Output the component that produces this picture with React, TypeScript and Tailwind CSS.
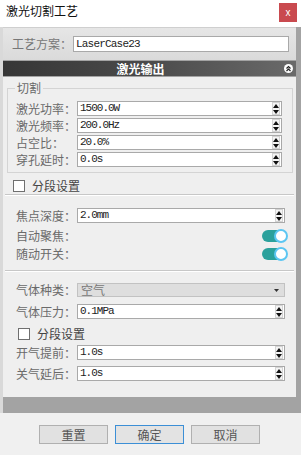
import React from 'react'

const cjk = { fontFamily: '"Noto Sans CJK SC", "Noto Sans", sans-serif' }
const mono = { fontFamily: '"Liberation Mono", "Noto Sans CJK SC", monospace' }

function Spin() {
  return (
    <div className="flex flex-col items-center justify-center gap-[2px] w-[8px] h-[13px] border border-[#d4d4d4] bg-[#f4f4f4] mr-[1px]">
      <svg width="6" height="4" viewBox="0 0 6 4"><path d="M0 4 L3 0 L6 4 Z" fill="#111" /></svg>
      <svg width="6" height="4" viewBox="0 0 6 4"><path d="M0 0 L6 0 L3 4 Z" fill="#111" /></svg>
    </div>
  )
}

function NumField({ label, value, w = 'w-[205px]' }: { label: string; value: string; w?: string }) {
  return (
    <div className="flex items-center h-[15px]">
      <span className="w-[61px] text-[12px] leading-none text-[#6a6a6a] whitespace-nowrap" style={cjk}>{label}</span>
      <div className={`${w} h-[15px] flex items-center justify-between bg-white border border-[#a9a9a9]`}>
        <span className="pl-[2px] text-[11px] tracking-[-1px] text-[#222] leading-none" style={mono}>{value}</span>
        <Spin />
      </div>
    </div>
  )
}

function Toggle() {
  return (
    <div className="relative w-[25px] h-[12px] rounded-full bg-[#2ba19c]">
      <div className="absolute right-[-1px] top-[-1px] w-[14px] h-[14px] rounded-full bg-white border-2 border-[#5cc6f2]" />
    </div>
  )
}

function Check({ label }: { label: string }) {
  return (
    <div className="flex items-center gap-[7px] h-[12px]">
      <div className="w-[12px] h-[12px] bg-white border border-[#6f6f6f]" />
      <span className="text-[12px] leading-none text-[#444]" style={cjk}>{label}</span>
    </div>
  )
}

function Btn({ label, primary }: { label: string; primary?: boolean }) {
  return (
    <button
      className={`w-[69px] h-[19px] text-[12px] leading-none text-[#555] ${primary ? 'border border-[#3c8fd6] bg-[#e3e3e3]' : 'border border-[#b0b0b0] bg-[#e1e1e1]'}`}
      style={cjk}
    >
      {label}
    </button>
  )
}

export default function App() {
  return (
    <div className="w-[301px] h-[455px] bg-[#f0f0f0] flex flex-col overflow-hidden">
      {/* title bar */}
      <div className="h-[27px] bg-white flex items-start justify-between pl-[6px] pr-[4px]">
        <span className="mt-[5px] text-[12px] leading-none text-[#111]" style={cjk}>激光切割工艺</span>
        <div className="mt-[3px] w-[18px] h-[19px] bg-[#c94a4f] flex items-center justify-center">
          <span className="text-white text-[10px] leading-none" style={{ fontFamily: '"Liberation Sans", sans-serif' }}>x</span>
        </div>
      </div>

      {/* main area */}
      <div className="h-[386px] bg-[#a3a3a3] border-l-[3px] border-[#d9d9d9] pr-[5px] flex flex-col">
        <div className="h-[33px] bg-gradient-to-b from-[#e6e6e6] to-[#dadada] border-t border-[#cfcfcf] flex items-center pl-[9px] pr-[4px]">
          <span className="w-[61px] text-[12px] leading-none text-[#777]" style={cjk}>工艺方案：</span>
          <div className="w-[216px] h-[16px] bg-white border border-[#a9a9a9] flex items-center">
            <span className="pl-[2px] text-[11px] tracking-[-0.8px] text-[#222] leading-none" style={mono}>LaserCase23</span>
          </div>
        </div>

        <div className="mt-[1px] h-[15px] bg-gradient-to-r from-[#363636] via-[#4b4b4b] to-[#6a6a6a] flex items-center relative">
          <span className="flex-1 text-center pr-[18px] text-[12px] leading-none font-bold text-white" style={cjk}>激光输出</span>
          <div className="absolute right-[3px] top-[3px] w-[9px] h-[9px] rounded-full bg-white flex items-center justify-center">
            <svg width="7" height="7" viewBox="0 0 7 7">
              <path d="M1.5 3.5 L3.5 1.5 L5.5 3.5 M1.5 6 L3.5 4 L5.5 6" stroke="#222" strokeWidth="1.2" fill="none" />
            </svg>
          </div>
        </div>

        {/* panel */}
        <div className="mt-[1px] h-[320px] bg-[#efefef] flex flex-col">
          <div className="mt-[11px] ml-[4px] mr-[3px] border border-[#d4d4d4] pb-[5px]">
            <span className="block w-fit -mt-[8px] ml-[7px] px-[2px] bg-[#efefef] text-[12px] leading-[14px] text-[#6a6a6a]" style={cjk}>切割</span>
            <div className="mt-[6px] pl-[8px] flex flex-col gap-[2px]">
              <NumField label="激光功率：" value="1500.0W" />
              <NumField label="激光频率：" value="200.0Hz" />
              <NumField label="占空比：" value="20.0%" />
              <NumField label="穿孔延时：" value="0.0s" />
            </div>
          </div>

          <div className="mt-[7px] ml-[10px]"><Check label="分段设置" /></div>
          <div className="mt-[2px] ml-[2px] mr-[2px] h-[2px] border-t border-[#c7c7c7] border-b border-b-white" />

          <div className="mt-[12px] pl-[13px] flex flex-col">
            <NumField label="焦点深度：" value="2.0mm" w="w-[208px]" />
            <div className="mt-[4px] h-[18px] flex items-center justify-between pr-[9px]">
              <span className="text-[12px] leading-none text-[#6a6a6a]" style={cjk}>自动聚焦：</span>
              <Toggle />
            </div>
            <div className="h-[18px] flex items-center justify-between pr-[9px]">
              <span className="text-[12px] leading-none text-[#6a6a6a]" style={cjk}>随动开关：</span>
              <Toggle />
            </div>
          </div>
          <div className="mt-[7px] ml-[2px] mr-[2px] h-[2px] border-t border-[#c7c7c7] border-b border-b-white" />

          <div className="mt-[11px] pl-[13px] flex flex-col">
            <div className="flex items-center h-[14px]">
              <span className="w-[61px] text-[12px] leading-none text-[#6a6a6a]" style={cjk}>气体种类：</span>
              <div className="w-[208px] h-[14px] bg-[#dedede] border border-[#c2c2c2] flex items-center justify-between">
                <span className="pl-[3px] text-[12px] leading-none text-[#777]" style={cjk}>空气</span>
                <svg className="mr-[5px]" width="5" height="3" viewBox="0 0 5 3"><path d="M0 0 L5 0 L2.5 3 Z" fill="#333" /></svg>
              </div>
            </div>
            <div className="mt-[7px]"><NumField label="气体压力：" value="0.1MPa" w="w-[208px]" /></div>
            <div className="mt-[9px] ml-[2px]"><Check label="分段设置" /></div>
            <div className="mt-[5px]"><NumField label="开气提前：" value="1.0s" w="w-[208px]" /></div>
            <div className="mt-[6px]"><NumField label="关气延后：" value="1.0s" w="w-[208px]" /></div>
          </div>
        </div>
      </div>

      {/* buttons */}
      <div className="flex justify-center gap-[7px] pt-[12px] pr-[2px]">
        <Btn label="重置" />
        <Btn label="确定" primary />
        <Btn label="取消" />
      </div>
    </div>
  )
}
